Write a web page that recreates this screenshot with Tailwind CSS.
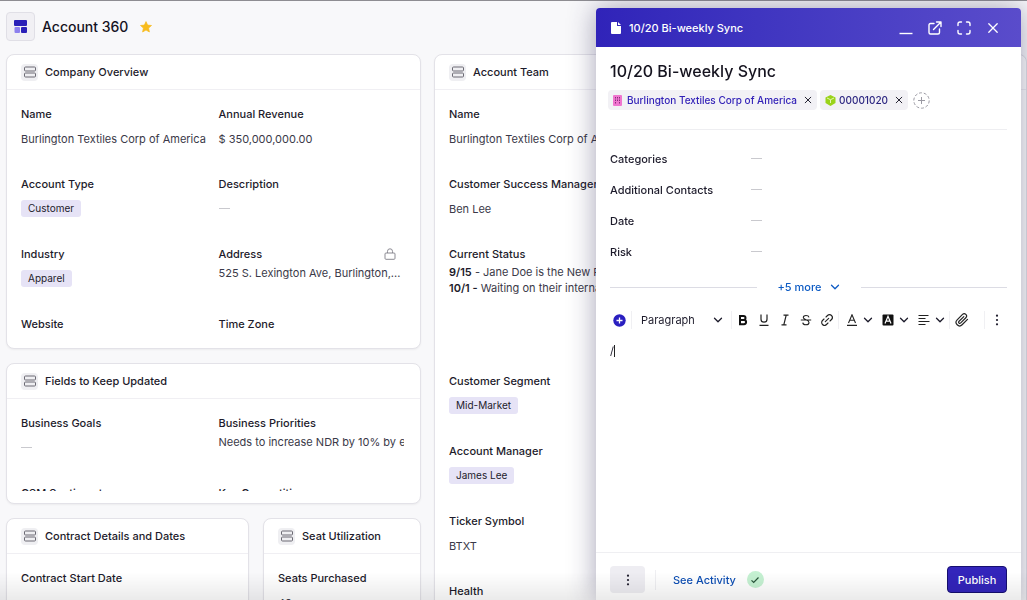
<!DOCTYPE html>
<html lang="en">
<head>
<meta charset="utf-8">
<meta name="viewport" content="width=device-width, initial-scale=1">
<title>Account 360</title>
<script src="https://cdn.jsdelivr.net/npm/@tailwindcss/browser@4"></script>
</head>
<body class="h-screen overflow-hidden bg-[#f8f8fa] font-['Inter',sans-serif] text-[11px] leading-4 text-[#1d1b2b]">
<svg class="hidden" aria-hidden="true">
  <symbol id="rows" viewBox="0 0 12 12"><g fill="none" stroke="#6c6b74" stroke-width="1"><rect x=".5" y="1" width="11" height="4" rx="1"/><rect x=".5" y="7" width="11" height="4" rx="1"/></g></symbol>
  <symbol id="chev" viewBox="0 0 10 10"><path d="M1.500 3.200 5 6.700l3.500-3.500" fill="none" stroke="currentColor" stroke-width="1.300" stroke-linecap="round" stroke-linejoin="round"/></symbol>
  <symbol id="cross" viewBox="0 0 10 10"><path d="m1.500 1.500 7 7m0-7-7 7" fill="none" stroke="currentColor" stroke-width="1.200" stroke-linecap="round"/></symbol>
  <symbol id="dots" viewBox="0 0 12 12"><g fill="currentColor"><circle cx="6" cy="1.700" r="1.100"/><circle cx="6" cy="6" r="1.100"/><circle cx="6" cy="10.300" r="1.100"/></g></symbol>
</svg>

<div class="flex h-full flex-col overflow-hidden border-t border-[#8e8d92]">
  <header class="mb-0.5 flex h-[51px] shrink-0 items-center pl-1.5">
    <span class="flex size-[29px] items-center justify-center rounded border border-[#e0dfe6] bg-[#f1f0f4]">
      <svg class="size-[13px]" viewBox="0 0 13 13"><rect x="0" y="0" width="13" height="6" rx="1" fill="#2a20b8"/><rect x="0.500" y="7" width="5.500" height="6" rx="1" fill="#8d80ee"/><rect x="7" y="7" width="6" height="6" rx="1" fill="#2a20b8"/></svg>
    </span>
    <h1 class="ml-[7px] text-[14px] leading-5 font-medium text-[#15131f]">Account 360</h1>
    <button class="ml-3" aria-label="Favorite"><svg class="size-3" viewBox="0 0 12 12"><path d="m6 .6 1.600 3.500 3.900.4-2.900 2.600.8 3.900L6 9 2.600 11l.8-3.900L.5 4.500l3.900-.4z" fill="#f8bc1e" stroke="#f8bc1e" stroke-width=".7" stroke-linejoin="round"/></svg></button>
  </header>

  <main class="grid min-h-0 flex-1 grid-cols-[415px_1fr] items-start gap-x-[13px] pl-1.5">
    <div class="grid gap-3.5">
      <section class="h-[295px] rounded-lg border border-[#e3e2e8] bg-white shadow-xs">
        <div class="flex h-[35px] items-center gap-[7px] border-b border-[#f0eff3] px-3.5">
          <span class="flex size-[17px] items-center justify-center rounded bg-[#efeff2]"><svg class="size-3"><use href="#rows"/></svg></span>
          <h2 class="font-medium">Company Overview</h2>
        </div>
        <dl class="grid auto-rows-[70px] grid-cols-2 gap-x-2.5 px-3.5 pt-4">
          <div><dt class="font-medium">Name</dt><dd class="mt-[9px] whitespace-nowrap text-[#3a3948]">Burlington Textiles Corp of America</dd></div>
          <div><dt class="font-medium">Annual Revenue</dt><dd class="mt-[9px] text-[#3a3948]">$ 350,000,000.00</dd></div>
          <div><dt class="font-medium">Account Type</dt><dd class="mt-2 flex"><span class="rounded-[3px] bg-[#e6e3f6] px-[7px] text-[10px] leading-[17px]">Customer</span></dd></div>
          <div><dt class="font-medium">Description</dt><dd class="mt-4 h-px w-[11px] bg-[#c9c9ce]"></dd></div>
          <div><dt class="font-medium">Industry</dt><dd class="mt-2 flex"><span class="rounded-[3px] bg-[#e6e3f6] px-[7px] text-[10px] leading-[17px]">Apparel</span></dd></div>
          <div><dt class="flex items-center justify-between pr-2.5 font-medium">Address <svg class="size-3" viewBox="0 0 12 12" fill="none" stroke="#8c8b93"><rect x="1" y="5" width="10" height="6.300" rx="1"/><path d="M3.500 5V3.300a2.500 2.500 0 0 1 5 0V5"/></svg></dt><dd class="mt-[3px] whitespace-nowrap text-[#3a3948]">525 S. Lexington Ave, Burlington,...</dd></div>
          <div><dt class="font-medium">Website</dt></div>
          <div><dt class="font-medium">Time Zone</dt></div>
        </dl>
      </section>

      <section class="h-[141px] rounded-lg border border-[#e3e2e8] bg-white shadow-xs">
        <div class="flex h-[35px] items-center gap-[7px] border-b border-[#f0eff3] px-3.5">
          <span class="flex size-[17px] items-center justify-center rounded bg-[#efeff2]"><svg class="size-3"><use href="#rows"/></svg></span>
          <h2 class="font-medium">Fields to Keep Updated</h2>
        </div>
        <dl class="mr-4 ml-3.5 grid h-[92px] auto-rows-[70px] grid-cols-2 gap-x-3 overflow-hidden pt-4">
          <div><dt class="font-medium">Business Goals</dt><dd class="mt-4 h-px w-[11px] bg-[#c9c9ce]"></dd></div>
          <div><dt class="font-medium">Business Priorities</dt><dd class="mt-[3px] whitespace-nowrap text-[#3a3948]">Needs to increase NDR by 10% by end</dd></div>
          <div><dt class="font-medium">CSM Sentiment</dt></div>
          <div><dt class="font-medium">Key Competition</dt></div>
        </dl>
      </section>

      <div class="grid grid-cols-[243px_1fr] gap-3.5">
        <section class="h-32 rounded-lg border border-[#e3e2e8] bg-white shadow-xs">
          <div class="flex h-[35px] items-center gap-[7px] border-b border-[#f0eff3] px-3.5">
            <span class="flex size-[17px] items-center justify-center rounded bg-[#efeff2]"><svg class="size-3"><use href="#rows"/></svg></span>
            <h2 class="font-medium">Contract Details and Dates</h2>
          </div>
          <dl class="px-3.5 pt-4"><dt class="font-medium">Contract Start Date</dt></dl>
        </section>
        <section class="h-32 rounded-lg border border-[#e3e2e8] bg-white shadow-xs">
          <div class="flex h-[35px] items-center gap-[7px] border-b border-[#f0eff3] px-3.5">
            <span class="flex size-[17px] items-center justify-center rounded bg-[#efeff2]"><svg class="size-3"><use href="#rows"/></svg></span>
            <h2 class="font-medium">Seat Utilization</h2>
          </div>
          <dl class="px-3.5 pt-4"><dt class="font-medium">Seats Purchased</dt><dd class="mt-[9px] text-[#3a3948]">40</dd></dl>
        </section>
      </div>
    </div>

    <section class="h-[640px] rounded-lg border border-[#e3e2e8] bg-white shadow-xs">
      <div class="flex h-[35px] items-center gap-[7px] border-b border-[#f0eff3] px-3.5">
        <span class="flex size-[17px] items-center justify-center rounded bg-[#efeff2]"><svg class="size-3"><use href="#rows"/></svg></span>
        <h2 class="font-medium">Account Team</h2>
      </div>
      <dl class="grid grid-rows-[70px_70px_127px_70px_70px_70px_70px] px-3.5 pt-4">
        <div><dt class="font-medium">Name</dt><dd class="mt-[9px] text-[#3a3948]">Burlington Textiles Corp of America</dd></div>
        <div><dt class="font-medium">Customer Success Manager</dt><dd class="mt-[9px] text-[#3a3948]">Ben Lee</dd></div>
        <div><dt class="font-medium">Current Status</dt><dd class="mt-0.5 text-[#3a3948]"><p><b class="font-semibold text-[#1d1b2b]">9/15</b> - Jane Doe is the New Primary Contact</p><p><b class="font-semibold text-[#1d1b2b]">10/1 -</b> Waiting on their internal review</p></dd></div>
        <div><dt class="font-medium">Customer Segment</dt><dd class="mt-2 flex"><span class="rounded-[3px] bg-[#e6e3f6] px-[7px] text-[10px] leading-[17px]">Mid-Market</span></dd></div>
        <div><dt class="font-medium">Account Manager</dt><dd class="mt-2 flex"><span class="rounded-[3px] bg-[#e6e3f6] px-[7px] text-[10px] leading-[17px]">James Lee</span></dd></div>
        <div><dt class="font-medium">Ticker Symbol</dt><dd class="mt-[9px] text-[#3a3948]">BTXT</dd></div>
        <div><dt class="font-medium">Health</dt></div>
      </dl>
    </section>
  </main>
</div>

<aside class="fixed top-2 right-1.5 bottom-0 flex w-[425px] flex-col rounded-t bg-white shadow-[0_0_28px_rgba(40,35,80,0.42)]" aria-label="Note">
  <header class="flex h-[39px] shrink-0 items-center rounded-t bg-linear-to-r from-[#3023b9] to-[#5a4ccb] pr-[21px] pl-[15px] text-white">
    <svg class="h-3 w-[10px]" viewBox="0 0 10 12"><path d="M1 0h5v3.500q0 .5.500.5H10v7q0 1-1 1H1q-1 0-1-1V1q0-1 1-1zm6 0 3 3H7z" fill="#fff"/></svg>
    <span class="ml-2 font-medium">10/20 Bi-weekly Sync</span>
    <div class="ml-auto flex gap-[15px]">
      <button aria-label="Minimize"><svg class="size-3.5" viewBox="0 0 14 14"><path d="M.5 12.500h13" stroke="#fff" stroke-width="1.400"/></svg></button>
      <button aria-label="Open in new window"><svg class="size-3.5" viewBox="0 0 14 14" fill="none" stroke="#fff" stroke-width="1.400" stroke-linecap="round" stroke-linejoin="round"><path d="M6 2.500H2.500q-1.500 0-1.500 1.500v7.500Q1 13 2.500 13H10q1.500 0 1.500-1.500V8M5.500 8.500 13 1M8.500 1H13v4.500"/></svg></button>
      <button aria-label="Full screen"><svg class="size-3.5" viewBox="0 0 14 14" fill="none" stroke="#fff" stroke-width="1.400" stroke-linecap="round"><path d="M1 4.500V3q0-2 2-2h1.500m5 0H11q2 0 2 2v1.500m0 5V11q0 2-2 2H9.500m-5 0H3q-2 0-2-2V9.500"/></svg></button>
      <button aria-label="Close"><svg class="size-3.5" viewBox="0 0 14 14" fill="none" stroke="#fff" stroke-width="1.300" stroke-linecap="round"><path d="m2.800 2.800 8.400 8.400m0-8.400-8.400 8.400"/></svg></button>
    </div>
  </header>

  <div class="flex min-h-0 flex-1 flex-col px-3.5 pt-3.5">
    <h2 class="text-base leading-5 font-medium text-[#15131f]">10/20 Bi-weekly Sync</h2>
    <div class="mt-[9px] flex items-center gap-[3px] border-b border-[#eeeef1] pb-[19px] text-[10px]">
      <span class="-ml-0.5 flex h-5 items-center rounded bg-[#f2f1f5] px-[5px] font-medium">
        <svg class="h-[11px] w-[9px]" viewBox="0 0 9 11"><rect width="9" height="11" rx="1" fill="#f075cf"/><path d="M2.500 2v7M6.500 2v7M4.500 2v4" stroke="#8a2c7c" stroke-width="1" stroke-dasharray="1.500 1"/></svg>
        <a href="#" class="ml-[5px] text-[#3322b8]">Burlington Textiles Corp of America</a>
        <button class="ml-[7px]" aria-label="Remove Burlington Textiles Corp of America"><svg class="size-2"><use href="#cross"/></svg></button>
      </span>
      <span class="flex h-5 items-center rounded bg-[#f2f1f5] px-[5px] font-medium">
        <svg class="size-[11px]" viewBox="0 0 11 11"><path d="m5.500 0 5 2.500v5.500l-5 3-5-3V2.500z" fill="#9ad31a"/><path d="m2 3 3.500 1.700L9 3M5.500 4.700V8" fill="none" stroke="#e4f6b5"/></svg>
        <a href="#" class="ml-[3px] text-[#2b2480]">00001020</a>
        <button class="ml-[7px]" aria-label="Remove 00001020"><svg class="size-2"><use href="#cross"/></svg></button>
      </span>
      <button class="ml-0.5" aria-label="Add record"><svg class="size-[17px]" viewBox="0 0 17 17" fill="none" stroke="#9b9aa3"><circle cx="8.500" cy="8.500" r="7.700" stroke-dasharray="3 1.800"/><path d="M8.500 5v7M5 8.500h7"/></svg></button>
    </div>

    <dl class="mt-[13px] grid auto-rows-[31px] grid-cols-[141px_1fr] items-center">
      <dt class="font-medium">Categories</dt><dd class="h-px w-[11px] bg-[#c9c9ce]"></dd>
      <dt class="font-medium">Additional Contacts</dt><dd class="h-px w-[11px] bg-[#c9c9ce]"></dd>
      <dt class="font-medium">Date</dt><dd class="h-px w-[11px] bg-[#c9c9ce]"></dd>
      <dt class="font-medium">Risk</dt><dd class="h-px w-[11px] bg-[#c9c9ce]"></dd>
    </dl>

    <div class="mt-3 flex items-center gap-[21px]">
      <span class="h-px flex-1 bg-[#dcdce4]"></span>
      <button class="flex items-center gap-2 font-medium text-[#0d5bc4]">+5 more <svg class="size-2.5"><use href="#chev"/></svg></button>
      <span class="h-px flex-1 bg-[#dcdce4]"></span>
    </div>

    <div class="mt-3.5 flex h-[22px] items-center" role="toolbar" aria-label="Formatting">
      <button class="ml-[3px]" aria-label="Insert"><svg class="size-[13px]" viewBox="0 0 13 13"><circle cx="6.500" cy="6.500" r="6.200" fill="#2a1fc0"/><path d="M6.500 3.500v6m-3-3h6" stroke="#fff" stroke-width="1.300"/></svg></button>
      <span class="ml-[5px] h-[18px] w-px bg-[#f0f0f3]"></span>
      <label class="ml-[9px] flex w-[82px] items-center">
        <span class="sr-only">Text style</span>
        <select class="w-[72px] appearance-none bg-transparent text-[11px]"><option>Paragraph</option><option>Heading 1</option><option>Heading 2</option></select>
        <svg class="size-2.5"><use href="#chev"/></svg>
      </label>
      <span class="ml-2 h-[18px] w-px bg-[#f0f0f3]"></span>
      <div class="ml-[5px] flex items-center gap-[9px]">
        <button aria-label="Bold"><svg class="size-3" viewBox="0 0 12 12" fill="none" stroke="#111" stroke-width="2"><path d="M3 2h3.500a2 2 0 0 1 0 4H3zm0 4h4a2.100 2.100 0 0 1 0 4.200H3z"/></svg></button>
        <button aria-label="Underline"><svg class="size-3" viewBox="0 0 12 12" fill="none" stroke="#222" stroke-width="1.200"><path d="M3 .5v4.700a3 3 0 0 0 6 0V.5M1.500 11.300h9"/></svg></button>
        <button aria-label="Italic"><svg class="size-3" viewBox="0 0 12 12" fill="none" stroke="#222" stroke-width="1.200"><path d="M4.500 1.200h5M2.500 10.800h5M7.200 1.200 4.800 10.800"/></svg></button>
        <button aria-label="Strikethrough"><svg class="size-3" viewBox="0 0 12 12" fill="none" stroke="#222" stroke-width="1.100"><path d="M9 3.300C8.500 1 3.300.7 3.300 3.500 3.300 6 9 5.500 9 8.400c0 3.200-6 3-6.200.2M.8 6h10.400"/></svg></button>
        <button aria-label="Link"><svg class="size-3" viewBox="0 0 12 12" fill="none" stroke="#222" stroke-width="1.100" stroke-linecap="round"><path d="m5 3 1.500-1.500a2.700 2.700 0 0 1 4 4L9 7M7 9l-1.500 1.500a2.700 2.700 0 0 1-4-4L3 5M4.300 7.700l3.400-3.400"/></svg></button>
      </div>
      <span class="ml-[5px] h-[18px] w-px bg-[#f0f0f3]"></span>
      <button class="ml-[7px] flex items-center gap-[5px]" aria-label="Text color"><svg class="size-3" viewBox="0 0 12 12" fill="none" stroke="#222" stroke-width="1.100"><path d="M2.500 9 6 .8 9.500 9M3.500 6.300h5M1 11.400h10"/></svg><svg class="size-2.5"><use href="#chev"/></svg></button>
      <button class="ml-[9px] flex items-center gap-[5px]" aria-label="Highlight color"><svg class="size-3" viewBox="0 0 12 12"><rect x=".5" y=".5" width="11" height="11" rx="1" fill="#111"/><path d="M3 9.500 6 2.300l3 7.200M4 7.200h4" fill="none" stroke="#fff" stroke-width="1.200"/></svg><svg class="size-2.5"><use href="#chev"/></svg></button>
      <button class="ml-[9px] flex items-center gap-[5px]" aria-label="Alignment"><svg class="size-3" viewBox="0 0 12 12" stroke="#222" stroke-width="1.100"><path d="M.5 1.500h10M.5 4.500h7M.5 7.500h11M.5 10.500h7"/></svg><svg class="size-2.5"><use href="#chev"/></svg></button>
      <span class="ml-1 h-[18px] w-px bg-[#f0f0f3]"></span>
      <button class="ml-[5px]" aria-label="Attach file"><svg class="size-3.5" viewBox="0 0 24 24" fill="none" stroke="#222" stroke-width="2" stroke-linecap="round" stroke-linejoin="round"><path d="m21.400 11-9.200 9.200a6 6 0 0 1-8.500-8.500l9.200-9.200a4 4 0 0 1 5.700 5.700l-9.200 9.200a2 2 0 0 1-2.800-2.800l8.500-8.500"/></svg></button>
      <span class="ml-auto h-[18px] w-px bg-[#f0f0f3]"></span>
      <button class="mr-1 ml-1.5" aria-label="More formatting"><svg class="size-3"><use href="#dots"/></svg></button>
    </div>

    <div class="relative mt-3 flex flex-1">
      <textarea class="flex-1 resize-none bg-transparent outline-none" aria-label="Note body">/</textarea>
      <span class="absolute top-0.5 left-1 h-3 w-px bg-[#222]"></span>
    </div>
  </div>

  <footer class="relative z-10 flex h-12 shrink-0 items-center border-t border-[#efeff2] px-3.5 pt-1.5">
    <button class="flex h-[27px] w-[35px] items-center justify-center rounded bg-[#eeedf2]" aria-label="More actions"><svg class="size-3"><use href="#dots"/></svg></button>
    <span class="ml-2.5 h-5 w-px bg-[#efeff2]"></span>
    <a href="#" class="ml-[17px] font-medium text-[#0f50b5]">See Activity</a>
    <span class="ml-[11px] flex size-[17px] items-center justify-center rounded-full bg-[#c5f1d2]"><svg class="size-2.5" viewBox="0 0 10 10"><path d="m1.500 5.300 2.200 2.200 4.800-5" fill="none" stroke="#28553a" stroke-width="1.200"/></svg></span>
    <button class="ml-auto h-[27px] w-[60px] rounded border border-[#160f70] bg-[#3325bb] font-medium text-white">Publish</button>
  </footer>
</aside>
<div class="pointer-events-none fixed inset-x-0 bottom-0 h-7 bg-linear-to-b from-transparent to-black/8"></div>
</body>
</html>
